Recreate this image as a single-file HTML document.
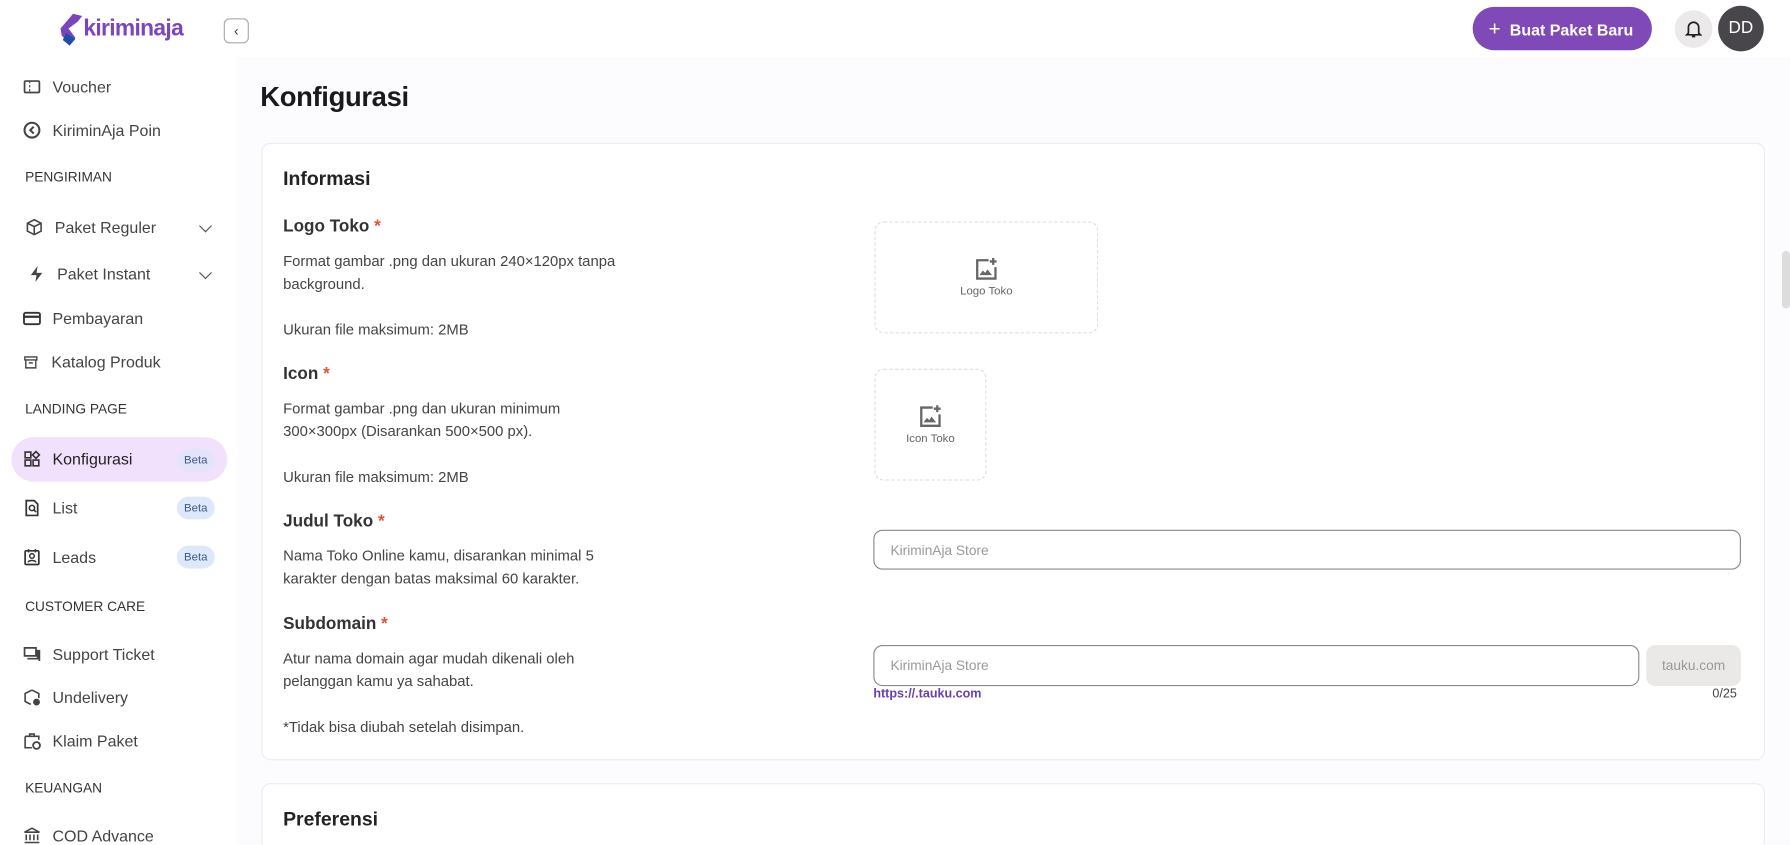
<!DOCTYPE html>
<html><head><meta charset="utf-8"><style>
*{box-sizing:border-box;margin:0;padding:0}
html,body{width:1790px;height:845px;overflow:hidden;background:#fff;font-family:"Liberation Sans",sans-serif;color:#333}
#w{position:absolute;left:0;top:0;width:1568px;height:740px;overflow:hidden;transform:scale(1.1416);transform-origin:0 0}
.a{position:absolute;white-space:nowrap}
.main{position:absolute;left:207px;top:50px;width:1361px;height:690px;background:#fcfbfe}
.si{position:absolute;left:20px;font-size:14px;color:#444;display:flex;align-items:center}
.si svg{width:16px;height:16px;margin-right:10px;flex:none}
.sec{position:absolute;left:22px;font-size:12px;color:#333}
.beta{position:absolute;left:155px;width:33px;height:20px;border-radius:10px;background:#dde8fa;color:#3e5a86;font-size:10px;text-align:center;line-height:21px}
.chev{position:absolute;left:176px;width:8px;height:8px;border-right:1.5px solid #555;border-bottom:1.5px solid #555;transform:rotate(45deg)}
.card{position:absolute;left:229px;width:1317px;background:#fff;border:1px solid #ececf0;border-radius:8px}
.lb{position:absolute;left:248px;font-size:15px;font-weight:bold;color:#333}
.lb b{color:#e0533a}
.ds{position:absolute;left:248px;font-size:13px;color:#444;line-height:20px}
.up{position:absolute;border:1.5px dashed #ddd;border-radius:8px;text-align:center;font-size:10px;color:#666}
.inp{position:absolute;border:1px solid #8a8a8a;border-radius:8px;font-size:12px;color:#999;padding-left:14px;display:flex;align-items:center}
</style></head><body><div id="w">
<div class="main"></div>
<div class="a" style="left:1561px;top:220px;width:7px;height:50px;background:#ddd;border-radius:3px"></div>
<!-- logo -->
<svg class="a" style="left:50px;top:11px" width="24" height="30" viewBox="0 0 24 30"><path d="M14 1 L22 3 L18 8 L10 14 L16 22 L11 28 L4 20 L3 14 Z" fill="#7a44bd"/><path d="M8 18 L16 23 L11 29 L5 24 Z" fill="#1f4fa3"/></svg>
<div class="a" style="left:73px;top:14px;font-size:20px;font-weight:bold;color:#7b45bf;letter-spacing:-0.6px">kiriminaja</div>
<div class="a" style="left:196px;top:16px;width:22px;height:22px;border:1px solid #aaa;border-radius:5px;font-size:12px;text-align:center;line-height:20px;color:#333">&#8249;</div>
<div class="a" style="left:1290px;top:6px;width:157px;height:38px;border-radius:19px;background:#8049b8;color:#fff;font-size:14px;font-weight:bold;line-height:38px;padding-left:14px"><span style="font-weight:normal;font-size:18px;margin-right:8px">+</span>Buat Paket Baru</div>
<div class="a" style="left:1467px;top:9px;width:33px;height:33px;border-radius:50%;background:#ece9eb"></div>
<svg class="a" style="left:1476px;top:17px" width="15" height="17" viewBox="0 0 15 17"><path d="M3 12V7a4.5 4.5 0 0 1 9 0v5l1.5 1.5h-12Z M6 15h3" fill="none" stroke="#222" stroke-width="1.5"/></svg>
<div class="a" style="left:1505px;top:5px;width:40px;height:40px;border-radius:50%;background:#48464b;color:#fff;font-size:15px;text-align:center;line-height:40px">DD</div>
<!-- sidebar -->
<div class="si" style="top:68px"><svg viewBox="0 0 16 16"><rect x="1.5" y="3" width="13" height="10" rx="1" fill="none" stroke="#444" stroke-width="1.5"/><path d="M6 3v10" stroke="#444" stroke-dasharray="2 1.5"/></svg>Voucher</div>
<div class="si" style="top:106px"><svg viewBox="0 0 16 16"><circle cx="8" cy="8" r="6.5" fill="none" stroke="#444" stroke-width="1.8"/><path d="M9.5 5L6.5 8l3 3" fill="none" stroke="#444" stroke-width="1.8"/></svg>KiriminAja Poin</div>
<div class="sec" style="top:148px">PENGIRIMAN</div>
<div class="si" style="top:191px;left:22px"><svg viewBox="0 0 16 16"><path d="M8 1.5l6 3v7l-6 3-6-3v-7zM2 4.5l6 3 6-3M8 7.5v7" fill="none" stroke="#444" stroke-width="1.4"/></svg>Paket Reguler</div><div class="chev" style="top:194px"></div>
<div class="si" style="top:232px;left:24px"><svg viewBox="0 0 16 16"><path d="M9 1L3 9h5l-1 6 6-8H8z" fill="#444"/></svg>Paket Instant</div><div class="chev" style="top:235px"></div>
<div class="si" style="top:271px"><svg viewBox="0 0 16 16"><rect x="1" y="3" width="14" height="10" rx="1.5" fill="none" stroke="#333" stroke-width="1.6"/><path d="M1 6.5h14" stroke="#333" stroke-width="2"/></svg>Pembayaran</div>
<div class="si" style="top:309px"><svg viewBox="0 0 16 16" style="width:14px;margin-right:11px"><path d="M2 3h12v3H2zM3 6v8h10V6M6 9h4" fill="none" stroke="#444" stroke-width="1.4"/></svg>Katalog Produk</div>
<div class="sec" style="top:351px">LANDING PAGE</div>
<div class="a" style="left:10px;top:383px;width:189px;height:39px;border-radius:20px;background:#f1e1fd"></div>
<div class="si" style="top:394px;color:#222"><svg viewBox="0 0 16 16"><path d="M2 2h5v5H2zM2 9h5v5H2zM9 9h5v5H9zM11.5 1.5l3 3-3 3-3-3z" fill="none" stroke="#333" stroke-width="1.4"/></svg>Konfigurasi</div><div class="beta" style="top:393px;background:#e3e3fb">Beta</div>
<div class="si" style="top:437px"><svg viewBox="0 0 16 16"><path d="M3 1.5h7l3 3v10H3z" fill="none" stroke="#333" stroke-width="1.5"/><circle cx="8" cy="8" r="2.3" fill="none" stroke="#333" stroke-width="1.4"/><path d="M9.6 9.6l2 2" stroke="#333" stroke-width="1.4"/></svg>List</div><div class="beta" style="top:435px">Beta</div>
<div class="si" style="top:480px"><svg viewBox="0 0 16 16"><rect x="2" y="2.5" width="12" height="12" rx="1" fill="none" stroke="#333" stroke-width="1.5"/><circle cx="8" cy="7" r="2" fill="none" stroke="#333" stroke-width="1.3"/><path d="M4.5 12.5c1-2 6-2 7 0M5 1v3M11 1v3" stroke="#333" stroke-width="1.3" fill="none"/></svg>Leads</div><div class="beta" style="top:478px">Beta</div>
<div class="sec" style="top:524px">CUSTOMER CARE</div>
<div class="si" style="top:565px"><svg viewBox="0 0 16 16"><path d="M1.5 2.5h10v7h-10zM4 12h9V5h1.5v9" fill="none" stroke="#444" stroke-width="1.5"/></svg>Support Ticket</div>
<div class="si" style="top:603px"><svg viewBox="0 0 16 16"><path d="M8 1.5l6 3v4M8 1.5l-6 3v7l5 2.5" fill="none" stroke="#444" stroke-width="1.4"/><circle cx="12" cy="12" r="3" fill="#444"/></svg>Undelivery</div>
<div class="si" style="top:641px"><svg viewBox="0 0 16 16"><path d="M6 4V2h4v2M2 4h12v3M2 4v10h6" fill="none" stroke="#444" stroke-width="1.4"/><circle cx="12" cy="12" r="3" fill="none" stroke="#444" stroke-width="1.6"/></svg>Klaim Paket</div>
<div class="sec" style="top:683px">KEUANGAN</div>
<div class="si" style="top:724px"><svg viewBox="0 0 16 16"><path d="M1.5 5L8 1.5 14.5 5zM3 7v5M6.3 7v5M9.7 7v5M13 7v5M1.5 14h13" fill="none" stroke="#444" stroke-width="1.4"/></svg>COD Advance</div>
<!-- main -->
<div class="a" style="left:228px;top:72px;font-size:24px;color:#1a1a1a;font-weight:bold;letter-spacing:-0.3px">Konfigurasi</div>
<div class="card" style="top:125px;height:541px"></div>
<div class="card" style="top:686px;height:80px"></div>
<div class="a" style="left:248px;top:147px;font-size:17px;font-weight:bold;color:#222">Informasi</div>
<div class="a" style="left:248px;top:708px;font-size:17px;font-weight:bold;color:#222">Preferensi</div>
<div class="lb" style="top:190px">Logo Toko <b>*</b></div>
<div class="ds" style="top:219px">Format gambar .png dan ukuran 240×120px tanpa<br>background.<br><br>Ukuran file maksimum: 2MB</div>
<div class="lb" style="top:319px">Icon <b>*</b></div>
<div class="ds" style="top:348px">Format gambar .png dan ukuran minimum<br>300×300px (Disarankan 500×500 px).<br><br>Ukuran file maksimum: 2MB</div>
<div class="lb" style="top:448px">Judul Toko <b>*</b></div>
<div class="ds" style="top:477px">Nama Toko Online kamu, disarankan minimal 5<br>karakter dengan batas maksimal 60 karakter.</div>
<div class="lb" style="top:538px">Subdomain <b>*</b></div>
<div class="ds" style="top:567px">Atur nama domain agar mudah dikenali oleh<br>pelanggan kamu ya sahabat.<br><br>*Tidak bisa diubah setelah disimpan.</div>
<div class="up" style="left:766px;top:194px;width:196px;height:98px"><svg style="margin-top:30px" width="22" height="22" viewBox="0 0 22 22"><path d="M13 3H3v16h16V9" fill="none" stroke="#666" stroke-width="2"/><path d="M17 1v6M14 4h6" stroke="#666" stroke-width="2"/><path d="M5 16l3-4 2 2 2-3 4 5z" fill="#666"/></svg><div>Logo Toko</div></div>
<div class="up" style="left:766px;top:323px;width:98px;height:98px"><svg style="margin-top:30px" width="22" height="22" viewBox="0 0 22 22"><path d="M13 3H3v16h16V9" fill="none" stroke="#666" stroke-width="2"/><path d="M17 1v6M14 4h6" stroke="#666" stroke-width="2"/><path d="M5 16l3-4 2 2 2-3 4 5z" fill="#666"/></svg><div>Icon Toko</div></div>
<div class="inp" style="left:765px;top:464px;width:760px;height:35px">KiriminAja Store</div>
<div class="inp" style="left:765px;top:565px;width:671px;height:36px">KiriminAja Store</div>
<div class="a" style="left:1442px;top:565px;width:83px;height:36px;border-radius:8px;background:#ebe8e8;color:#999;font-size:12px;text-align:center;line-height:36px">tauku.com</div>
<div class="a" style="left:765px;top:602px;font-size:11px;font-weight:bold;color:#6a3fae">https://.tauku.com</div>
<div class="a" style="left:1500px;top:602px;font-size:11px;color:#444">0/25</div>
</div></body></html>
